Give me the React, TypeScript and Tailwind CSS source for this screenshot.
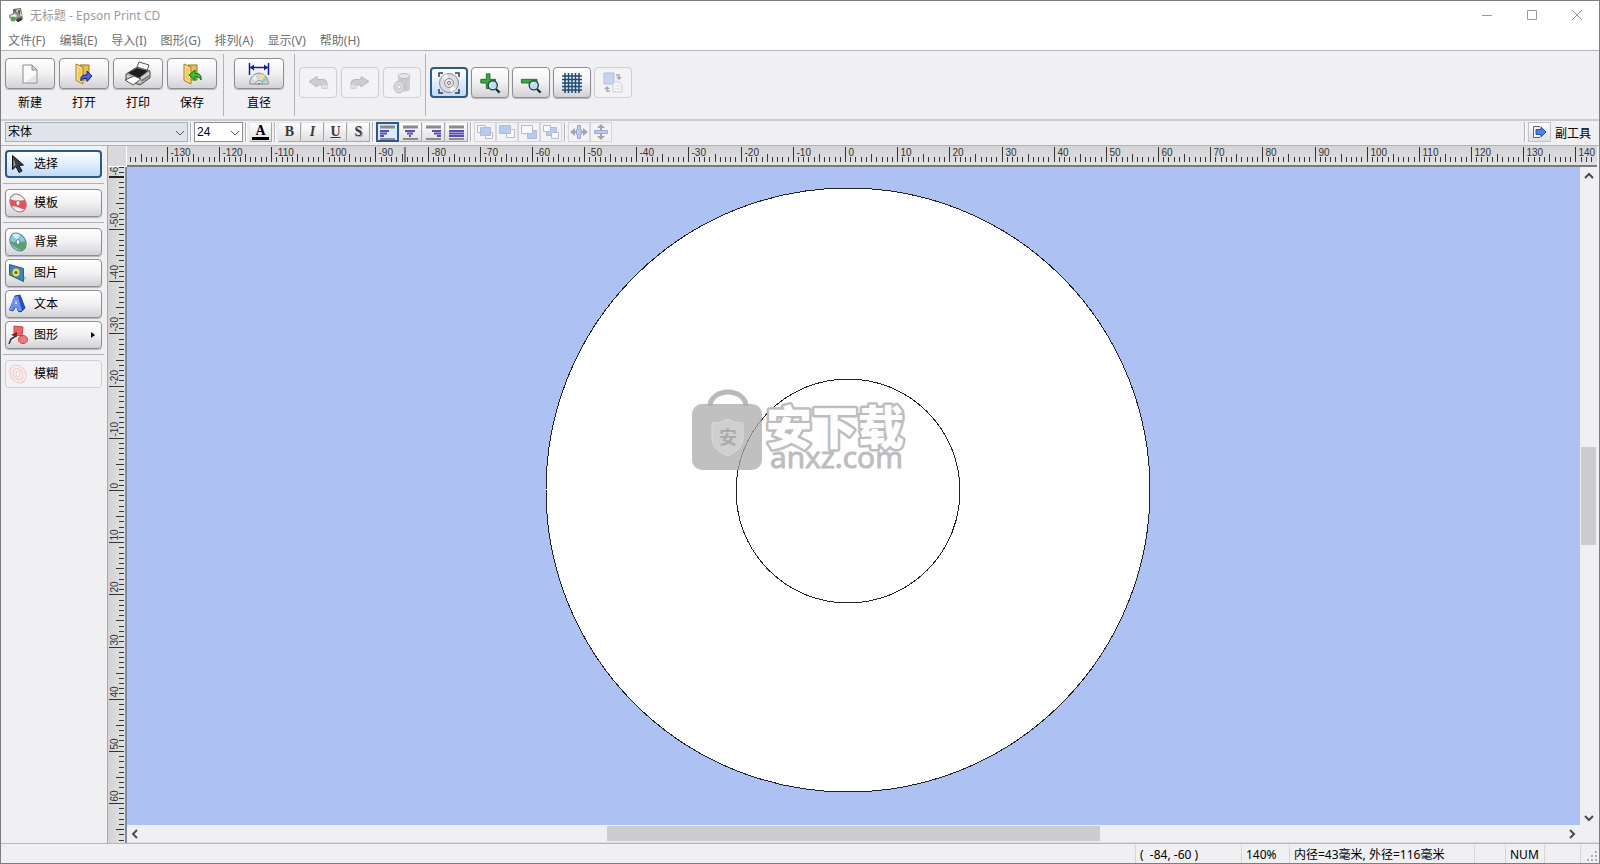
import { ReactNode, useEffect, useState } from "react"
import clsx from "clsx"

const MM = 5.217
const ZERO_X = 719
const ZERO_Y = 324

const menus = ["文件(F)", "编辑(E)", "导入(I)", "图形(G)", "排列(A)", "显示(V)", "帮助(H)"]

const raised = "border border-[#8e8e92] bg-gradient-to-b from-white via-[#f1f1f3] to-[#d3d3d6] shadow-[0_1px_1px_#b5b5b8]"
const pressed = "border-2 border-[#2c5a85] bg-gradient-to-b from-white to-[#bfdcf8]"
const faded = "border border-[#cfcfd3] bg-[#f3f2f5]"

/* ---------- icons ---------- */

const AppIcon = () => (
    <svg width="16" height="16" viewBox="0 0 16 16">
        <path d="M5 2l8-1 2 11-5 3-5-4z" fill="#6c6c66" />
        <path d="M8 3l4-1 2 7-4 1z" fill="#d8d6cf" />
        <path d="M9 9l2-6M11 9l1-6" stroke="#444" />
        <path d="M1 8l6-3 5 4-5 4-6-2z" fill="#8fa28c" />
        <path d="M2 9l5-2 2 2-4 2z" fill="#eef5ec" />
        <circle cx="5" cy="12" r="2.5" fill="#56a052" />
        <path d="M8 13l5-2 1 2-4 2z" fill="#333" />
    </svg>
)

const NewIcon = () => (
    <svg width="24" height="24" viewBox="0 0 24 24">
        <path d="M5 3h9l5 5v13H5z" fill="#fbfbfb" stroke="#8b8b8b" />
        <path d="M14 3v5h5z" fill="#d5d5d5" stroke="#8b8b8b" />
        <path d="M7 20h11V12z" fill="#e6e6e6" />
    </svg>
)

const FolderIcon = ({ arrow }: { arrow: "out" | "in" }) => (
    <svg width="24" height="24" viewBox="0 0 24 24">
        <path d="M8 3h9v15H8z" fill="#e9bd55" stroke="#9b7522" />
        <path d="M4 2l7 3V22l-7-3.500z" fill="#f9dc8a" stroke="#a67e2a" />
        <path d="M6 5.500l3 1V19l-3-1.500z" fill="#f3c964" />
        {arrow === "out" ? (
            <path d="M9 19q-1-6 4-6h2V9l5 5-5 5.500v-3h-3q-2 0-3 2.500z" fill="#4a62d8" stroke="#1f2b8c" />
        ) : (
            <path d="M21 18q1-6-4-6.500h-2V8l-6 5 6 5.500V15h3q2 0 3 3z" fill="#35c23c" stroke="#13701b" />
        )}
    </svg>
)

const PrinterIcon = () => (
    <svg width="28" height="26" viewBox="0 0 28 26">
        <path d="M12 9l3-8 10 3-3 9z" fill="#fafafa" stroke="#555" />
        <path d="M2 13l11-7 13 4v7l-10 7L2 19z" fill="#a9a9ab" stroke="#555" />
        <path d="M4 12l9-5 11 3-9 7z" fill="#1d1d1f" />
        <path d="M3 14l12 4 10-7v5l-9 6-13-4z" fill="#d4d4d6" />
        <path d="M1 19l9-4 7 3-8 6z" fill="#fff" stroke="#4c4c4c" />
        <path d="M17 20l8-5" stroke="#777" strokeWidth="2" />
    </svg>
)

const DiameterIcon = () => (
    <svg width="24" height="24" viewBox="0 0 24 24">
        <path d="M2.500 1v12M21.500 1v12M3 5.500h18" stroke="#1b1b9c" strokeWidth="1.500" fill="none" />
        <path d="M3 5.500l4-3v6zM21 5.500l-4-3v6z" fill="#1b1b9c" />
        <path d="M2.500 22a9.500 11 0 0 1 19 0z" fill="#d4d6da" stroke="#8c8f96" />
        <path d="M12 22L14 11.500l4 2z" fill="#f2e18a" />
        <path d="M12 22l6-7.500 3 4z" fill="#8fd0c4" />
        <path d="M12 22l-7-6 3-3z" fill="#eef0f3" />
        <path d="M8.500 22a3.500 3.500 0 0 1 7 0z" fill="#f7f7f7" stroke="#8c8f96" />
        <path d="M10.500 22a1.500 1.500 0 0 1 3 0z" fill="#777" />
    </svg>
)

const TurnIcon = ({ flip }: { flip?: boolean }) => (
    <svg width="20" height="16" viewBox="0 0 20 16" className={clsx(flip && "-scale-x-100")}>
        <path d="M1 6.500l8-5v3h6q4 0 4 4v5h-5v-3.500H9v2z" fill="#cdcdd0" stroke="#b9b9bd" />
        <path d="M14 10h5v3.500h-5z" fill="#e0e0e2" />
    </svg>
)

const TrashIcon = () => (
    <svg width="22" height="24" viewBox="0 0 22 24">
        <path d="M7 5v14q6 3 12 0V5z" fill="#cfcfd2" />
        <ellipse cx="13" cy="5" rx="6" ry="2.500" fill="#e6e6e8" stroke="#bcbcc0" />
        <path d="M11 7v13M15 7v13" stroke="#bdbdc1" />
        <ellipse cx="8" cy="16" rx="5" ry="6" fill="#dadadd" stroke="#bebec2" />
        <circle cx="8" cy="16" r="2" fill="#f3f3f4" stroke="#c4c4c8" />
    </svg>
)

const FitIcon = () => (
    <svg width="24" height="24" viewBox="0 0 24 24">
        <path d="M2 6V2h4M18 2h4v4M22 18v4h-4M6 22H2v-4" fill="none" stroke="#3b3b3b" strokeWidth="1.500" />
        <circle cx="12" cy="12" r="9.500" fill="#dcdcde" stroke="#8a8a8e" />
        <path d="M12 12L5 6a9 9 0 0 1 5-3zM12 12l7 6a9 9 0 0 1-5 3z" fill="#fafafa" />
        <circle cx="12" cy="12" r="4.500" fill="#e6e6e8" stroke="#8f8f93" />
        <circle cx="12" cy="12" r="1.500" fill="#fff" stroke="#77777b" />
    </svg>
)

const MagnifierIcon = ({ plus }: { plus?: boolean }) => (
    <svg width="22" height="22" viewBox="0 0 24 24">
        {plus ? (
            <path d="M8 2h4v6h6v4h-6v6H8v-6H2V8h6z" fill="#3fa83f" stroke="#1e6a24" />
        ) : (
            <path d="M1.500 8h17v4h-17z" fill="#3fa83f" stroke="#1e6a24" />
        )}
        <path d="M18.500 18.500l4 4" stroke="#1c2c38" strokeWidth="2.500" />
        <circle cx="15" cy="14.500" r="5" fill="#b9e0ec" stroke="#2d4351" strokeWidth="1.500" />
        <path d="M12.500 14a3 3 0 0 1 3-2" fill="none" stroke="#fff" />
    </svg>
)

const GridIcon = () => (
    <svg width="20" height="20" viewBox="0 0 20 20">
        <path d="M3 0v20M6.500 0v20M10 0v20M13.500 0v20M17 0v20M0 3h20M0 6.500h20M0 10h20M0 13.500h20M0 17h20" stroke="#1f4a74" strokeWidth="1.500" />
    </svg>
)

const SwapIcon = () => (
    <svg width="22" height="22" viewBox="0 0 22 22">
        <path d="M2 1h10v11H2z" fill="#c6d3f2" stroke="#b3bde0" />
        <path d="M11 10h6l3 3v7h-9z" fill="#fafafa" stroke="#c9c9cd" />
        <path d="M13 14h5M13 17h5" stroke="#d4d4d8" />
        <path d="M14 3h3v3M8 19H5v-3" fill="none" stroke="#a9a9ad" strokeWidth="1.500" />
        <path d="M14 5h6l-3 3zM2 17h6l-3-3z" fill="#a9a9ad" />
    </svg>
)

const AlignIcon = ({ kind }: { kind: "left" | "center" | "right" | "justify" }) => {
    const bars = {
        left: "M1 7h9M1 9.500h7M1 12h4",
        center: "M3 7h10M5 9.500h6M7 12h2",
        right: "M7 7h9M9 9.500h7M12 12h4",
        justify: "M1 7h15M1 9.500h15M1 12h15",
    }
    return (
        <svg width="17" height="17" viewBox="0 0 17 17">
            <path d="M1 3h15" stroke="#8a8a8c" strokeWidth="3" />
            <path d={bars[kind]} stroke="#5650b4" strokeWidth="2" />
            <path d="M1 15h15" stroke="#6d6d72" strokeWidth="1.500" />
        </svg>
    )
}

const OrderIcon = ({ kind }: { kind: number }) => (
    <svg width="18" height="18" viewBox="0 0 18 18" stroke="#b4bad0">
        {kind === 0 && (
            <>
                <path d="M1.500 2.500h8v7h-8zM9.500 9.500h7v6h-7z" fill="#fafafa" />
                <path d="M4.500 4.500h10v8h-10z" fill="#b8c9f2" />
            </>
        )}
        {kind === 1 && (
            <>
                <path d="M8.500 6.500h8v8h-8z" fill="#fafafa" />
                <path d="M1.500 2.500h11v8h-11z" fill="#b8c9f2" />
            </>
        )}
        {kind === 2 && (
            <>
                <path d="M7.500 7.500h9v8h-9z" fill="#b8c9f2" />
                <path d="M1.500 2.500h11v8h-11z" fill="#fafafa" />
            </>
        )}
        {kind === 3 && (
            <>
                <path d="M4.500 4.500h10v8h-10z" fill="#b8c9f2" />
                <path d="M1.500 2.500h7v6h-7zM9.500 9.500h7v6h-7z" fill="#fafafa" />
            </>
        )}
    </svg>
)

const CenterIcon = ({ vertical }: { vertical?: boolean }) => (
    <svg width="18" height="18" viewBox="0 0 18 18">
        {vertical ? (
            <>
                <path d="M9 1l4 4H5zM9 17l4-4H5z" fill="#a3a3a8" />
                <path d="M9 4v10" stroke="#a3a3a8" strokeWidth="2" />
                <path d="M2.500 7.500h13v3h-13z" fill="#b8c9f2" stroke="#9cabd6" />
            </>
        ) : (
            <>
                <path d="M0 9l5-4v8zM18 9l-5-4v8z" fill="#a3a3a8" />
                <path d="M4 9h10" stroke="#a3a3a8" strokeWidth="2" />
                <path d="M6.500 6.500h1v-4h3v4h1v5h-1v4h-3v-4h-1z" fill="#b8c9f2" stroke="#9cabd6" />
            </>
        )}
    </svg>
)

const ExitIcon = () => (
    <svg width="16" height="16" viewBox="0 0 16 16">
        <path d="M9 2.500H2.500v11H9" fill="#f5f5f5" stroke="#5d6470" />
        <path d="M5 5.500h5V3l5 5-5 5v-2.500H5z" fill="#4d80ea" stroke="#2450b0" />
    </svg>
)

const ArrowIcon = () => (
    <svg width="20" height="20" viewBox="0 0 20 20">
        <path d="M4.500 1.500v14l3.500-3 3 6 3-1.500-3-5.500 4.500-.5z" fill="#3d3d40" stroke="#111" />
        <path d="M5.500 4v9l2-2z" fill="#a8a8ab" />
    </svg>
)

const DiscIcon = ({ kind }: { kind: "red" | "blue" | "pale" }) => {
    const c = {
        red: ["#f2f0f0", "#e4525a", "#9a7c7e"],
        blue: ["#8cc8de", "#5ca06a", "#4f7f94"],
        pale: ["#fbecec", "#f7dada", "#f0c6c6"],
    }[kind]
    return (
        <svg width="20" height="20" viewBox="0 0 20 20">
            <g transform="rotate(-35 10 10)">
                <ellipse cx="10" cy="10" rx="7.500" ry="9.500" fill={c[0]} stroke={c[2]} />
            </g>
            {kind === "red" && <path d="M2 6q5 3 15 1 2 5 1 8-3 2-6 0-4-2-9-2-1-3-1-7z" fill={c[1]} />}
            {kind === "blue" && <path d="M2 9q7 3 15 0 2 5-1 9-4 1-9-3-4-3-5-6z" fill={c[1]} />}
            {kind === "blue" && <path d="M4 3l5 5 3-5q-4-3-8 0z" fill="#d7eff6" />}
            {kind === "pale" && <ellipse cx="10" cy="10" rx="4.500" ry="6" fill="none" stroke={c[2]} transform="rotate(-35 10 10)" />}
            <ellipse cx="10" cy="10" rx="2" ry="2.500" fill="#fff" stroke={c[2]} />
        </svg>
    )
}

const PictureIcon = () => (
    <svg width="20" height="20" viewBox="0 0 20 20">
        <path d="M14 18l5-3-3-2z" fill="#b9b9bd" />
        <path d="M1.500 1.500l14 4v13l-14-6.500z" fill="#3f83bb" stroke="#2d5f8c" />
        <ellipse cx="8" cy="9.500" rx="3.500" ry="4" fill="#f0dc48" />
        <circle cx="8" cy="9.500" r="1.500" fill="#6a5a1c" />
        <path d="M2 8l4 5-4-1.500z" fill="#4a9b52" />
    </svg>
)

const LetterIcon = () => (
    <svg width="20" height="20" viewBox="0 0 20 20">
        <path d="M1.500 16L7 2l5-1 5 13-4 4-3-1-1-4H7l-2 4z" fill="#2c50b4" stroke="#213f94" />
        <path d="M1.500 16L6 3l4-1 4 15h-4l-1-4-3 .5-1 3z" fill="#6b93ee" />
        <path d="M7 10l1-4 1 4z" fill="#e8eefc" />
    </svg>
)

const ShapeIcon = () => (
    <svg width="20" height="20" viewBox="0 0 20 20">
        <path d="M6 1l9 1-1 9-8-1z" fill="#ea6468" stroke="#c1474b" />
        <ellipse cx="15" cy="14.500" rx="4.500" ry="4" fill="#ee7a7c" stroke="#b9454a" />
        <path d="M1 19l2-5 5-3" fill="none" stroke="#333" strokeWidth="1.500" />
        <path d="M3 10l6-3 0 5z" fill="#8f2026" />
    </svg>
)

const Chevron = ({ className }: { className?: string }) => (
    <svg width="10" height="10" viewBox="0 0 10 10" className={className}>
        <path d="M1 3l4 4 4-4" fill="none" stroke="currentColor" />
    </svg>
)

/* ---------- small parts ---------- */

const Divider = () => <div className="w-px self-stretch bg-[#b4b4b8]" />

const Grip = () => <div className="mx-[2px] h-5 w-[2px] border-l border-[#b4b4b8] bg-white" />

interface BigButtonProps {
    label: string;
    children: ReactNode;
}

const BigButton = ({ label, children }: BigButtonProps) => (
    <button type="button" className="flex w-[50px] flex-col items-center gap-1">
        <span className={clsx("flex h-[31px] w-full items-center justify-center rounded-[4px]", raised)}>{children}</span>
        <span className="leading-5">{label}</span>
    </button>
)

interface IconButtonProps {
    title: string;
    state?: "on" | "off";
    children: ReactNode;
}

const IconButton = ({ title, state, children }: IconButtonProps) => (
    <button
        type="button"
        aria-label={title}
        disabled={state === "off"}
        className={clsx(
            "flex h-[31px] w-[38px] items-center justify-center rounded-[4px]",
            state === "on" ? pressed : state === "off" ? faded : raised
        )}
    >
        {children}
    </button>
)

const FormatButton = ({ title, state, children }: IconButtonProps) => (
    <button
        type="button"
        aria-label={title}
        disabled={state === "off"}
        className={clsx(
            "flex h-5 items-center justify-center font-['Liberation_Serif',serif] text-sm leading-4 font-bold text-[#3a3a3d]",
            state === "off" ? "w-[22px]" : "w-[23px]",
            state === "on" && "border-2 border-[#2c5a85] bg-[#dcebfa]",
            state === "off" && "border border-[#d6d6da] bg-[#f3f2f5]",
            !state && "border border-t-[#e6e6e8] border-r-[#a5a5a9] border-b-[#a5a5a9] border-l-[#e6e6e8] bg-gradient-to-b from-white to-[#dedee1]"
        )}
    >
        {children}
    </button>
)

interface ToolButtonProps {
    label: string;
    icon: ReactNode;
    active?: boolean;
    disabled?: boolean;
    submenu?: boolean;
    onClick?: () => void;
}

const ToolButton = ({ label, icon, active, disabled, submenu, onClick }: ToolButtonProps) => (
    <button
        type="button"
        disabled={disabled}
        onClick={onClick}
        className={clsx(
            "flex h-7 w-full items-center gap-[6px] rounded-[4px] text-left",
            active ? "pl-px" : "pl-[2px]",
            active ? pressed : disabled ? faded : raised
        )}
    >
        {icon}
        <span>{label}</span>
        {submenu && (
            <svg width="4" height="6" viewBox="0 0 4 6" className="mr-[6px] ml-auto">
                <path d="M0 0l4 3-4 3z" fill="#000" />
            </svg>
        )}
    </button>
)

const ToolRule = () => <div className="-mx-[2px] my-[5px] h-px bg-[#b0b0b4]" />

/* ---------- rulers ---------- */

const tickSize = (n: number) => (n % 10 === 0 ? 15 : n % 5 === 0 ? 8 : 5)

const range = (from: number, to: number) => Array.from({ length: Math.max(0, to - from + 1) }, (_, i) => from + i)

const HorizontalRuler = ({ length }: { length: number }) => (
    <svg className="block h-5 w-full font-['Liberation_Sans',sans-serif] text-[10px]">
        {range(-137, Math.floor((length - ZERO_X) / MM)).map((n) => {
            const x = Math.round(ZERO_X + n * MM) - 0.5
            return (
                <g key={n}>
                    <line x1={x} x2={x} y1={16 - tickSize(n)} y2={16} stroke="#333" />
                    {n % 10 === 0 && <text x={x + 3} y="10" fill="#333">{n}</text>}
                </g>
            )
        })}
        <rect x="277" y="1" width="2" height="15" fill="#7d7d80" />
    </svg>
)

const VerticalRuler = ({ length }: { length: number }) => (
    <svg className="block h-full w-[17px] font-['Liberation_Sans',sans-serif] text-[10px]">
        {range(-62, Math.floor((length - ZERO_Y) / MM)).map((n) => {
            const y = Math.round(ZERO_Y + n * MM) - 0.5
            return (
                <g key={n}>
                    <line x1={16 - tickSize(n)} x2={16} y1={y} y2={y} stroke="#333" />
                    {n % 10 === 0 && <text transform={`translate(10 ${y - 2}) rotate(-90)`} fill="#333">{n}</text>}
                </g>
            )
        })}
        <rect x="1" y="9" width="15" height="2" fill="#222" />
    </svg>
)

const Watermark = () => (
    <g transform="translate(565 222)">
        <path d="M18 17a18 14 0 0 1 36 0" fill="none" stroke="#b9b9b9" strokeWidth="5" />
        <rect x="0" y="15" width="70" height="66" rx="10" fill="#ababab" fillOpacity="0.75" />
        <path d="M20 34q9 0 15.500-4 7 4 15.500 4v16q0 10-15.500 17Q20 60 20 50z" fill="#cfcfcf" stroke="#d9d9d9" />
        <text x="36" y="55" textAnchor="middle" fill="#ababab" className="text-[18px] font-bold">安</text>
        <text x="74" y="55" fill="#fdfdfd" stroke="#bdbdbd" strokeWidth="5" strokeLinejoin="round" paintOrder="stroke" className="text-[46px] font-black">
            安下载
        </text>
        <text x="78" y="79" fill="#bdbdbd" stroke="#bdbdbd" className="font-['Open_Sans',sans-serif] text-[30px]">anxz.com</text>
    </g>
)

const Canvas = () => (
    <svg className="block h-full w-full bg-[#aec1f3]">
        <g stroke="#222" shapeRendering="crispEdges">
            <circle cx="721" cy="323" r="302" fill="#fefefe" />
            <circle cx="721" cy="324" r="112" fill="none" />
        </g>
        <Watermark />
    </svg>
)

/* ---------- page ---------- */

export default function App() {
    const [tool, setTool] = useState("选择")
    const [size, setSize] = useState({ width: window.innerWidth, height: window.innerHeight })

    useEffect(() => {
        const onResize = () => setSize({ width: window.innerWidth, height: window.innerHeight })
        window.addEventListener("resize", onResize)
        return () => window.removeEventListener("resize", onResize)
    }, [])

    return (
        <div className="flex h-screen w-full flex-col overflow-hidden border border-[#7c7f80] bg-[#f0eff2] font-['Noto_Sans','Noto_Sans_CJK_SC',sans-serif] text-xs text-black">
            <header className="bg-white">
                <div className="flex h-7 items-center gap-[6px] pl-[7px] text-[#9a9a9a]">
                    <AppIcon />
                    <h1 className="flex-1 pt-px">无标题 - Epson Print CD</h1>
                    <div className="flex text-[#999]">
                        <button type="button" aria-label="最小化" className="flex w-[45px] justify-center">
                            <svg width="10" height="10" viewBox="0 0 10 10"><path d="M0 5.500h10" stroke="currentColor" /></svg>
                        </button>
                        <button type="button" aria-label="最大化" className="flex w-[45px] justify-center">
                            <svg width="10" height="10" viewBox="0 0 10 10"><path d="M.5.5h9v9h-9z" fill="none" stroke="currentColor" /></svg>
                        </button>
                        <button type="button" aria-label="关闭" className="flex w-[45px] justify-center">
                            <svg width="10" height="10" viewBox="0 0 10 10"><path d="M0 0l10 10M10 0L0 10" stroke="currentColor" /></svg>
                        </button>
                    </div>
                </div>
                <nav className="flex h-[22px] items-center gap-[14px] border-b border-[#b3b3b6] pt-[2px] pl-[7px] text-[#6e6e6e]">
                    {menus.map((menu) => (
                        <button type="button" key={menu}>{menu}</button>
                    ))}
                </nav>
            </header>

            <div className="flex h-[70px] border-b-2 border-[#cbcbce] py-[3px] pl-1">
                <div className="flex items-start gap-1 pt-1">
                    <BigButton label="新建"><NewIcon /></BigButton>
                    <BigButton label="打开"><FolderIcon arrow="out" /></BigButton>
                    <BigButton label="打印"><PrinterIcon /></BigButton>
                    <BigButton label="保存"><FolderIcon arrow="in" /></BigButton>
                </div>
                <div className="ml-[6px] flex"><Divider /></div>
                <div className="mr-[10px] ml-[10px] pt-1">
                    <BigButton label="直径"><DiameterIcon /></BigButton>
                </div>
                <Divider />
                <div className="mx-[4px] flex items-start gap-[4px] pt-[13px]">
                    <IconButton title="撤消" state="off"><TurnIcon /></IconButton>
                    <IconButton title="恢复" state="off"><TurnIcon flip /></IconButton>
                    <IconButton title="删除" state="off"><TrashIcon /></IconButton>
                </div>
                <Divider />
                <div className="mx-[4px] flex items-start gap-[3px] pt-[13px]">
                    <IconButton title="适合窗口" state="on"><FitIcon /></IconButton>
                    <IconButton title="放大"><MagnifierIcon plus /></IconButton>
                    <IconButton title="缩小"><MagnifierIcon /></IconButton>
                    <IconButton title="网格"><GridIcon /></IconButton>
                    <IconButton title="切换" state="off"><SwapIcon /></IconButton>
                </div>
            </div>

            <div className="flex h-[25px] items-start border-b border-[#b3b3b6] pt-px pr-2 pl-1">
                <div className="relative">
                    <select aria-label="字体" className="block h-5 w-[183px] appearance-none border border-[#a3b0b8] bg-[#e0e4ea] pl-[2px]">
                        <option>宋体</option>
                    </select>
                    <Chevron className="pointer-events-none absolute top-[6px] right-[3px] text-[#555]" />
                </div>
                <Grip />
                <div className="relative">
                    <select aria-label="字号" className="block h-5 w-[49px] appearance-none border border-[#8e8e92] bg-white pl-[2px] font-['Liberation_Sans',sans-serif]">
                        <option>24</option>
                    </select>
                    <Chevron className="pointer-events-none absolute top-[6px] right-[3px] text-[#555]" />
                </div>
                <Grip />
                <FormatButton title="颜色">
                    <span className="border-b-[3px] border-black px-[3px] leading-[12px] text-black">A</span>
                </FormatButton>
                <Grip />
                <div className="flex">
                    <FormatButton title="粗体">B</FormatButton>
                    <FormatButton title="斜体"><span className="italic">I</span></FormatButton>
                    <FormatButton title="下划线"><span className="underline">U</span></FormatButton>
                    <FormatButton title="阴影"><span className="[text-shadow:1px_1px_0_#aaa]">S</span></FormatButton>
                </div>
                <Grip />
                <div className="flex">
                    <FormatButton title="左对齐" state="on"><AlignIcon kind="left" /></FormatButton>
                    <FormatButton title="居中"><AlignIcon kind="center" /></FormatButton>
                    <FormatButton title="右对齐"><AlignIcon kind="right" /></FormatButton>
                    <FormatButton title="两端对齐"><AlignIcon kind="justify" /></FormatButton>
                </div>
                <Grip />
                <div className="flex">
                    {["移到最前", "前移", "后移", "移到最后"].map((title, index) => (
                        <FormatButton key={title} title={title} state="off"><OrderIcon kind={index} /></FormatButton>
                    ))}
                </div>
                <Grip />
                <div className="flex">
                    <FormatButton title="水平居中" state="off"><CenterIcon /></FormatButton>
                    <FormatButton title="垂直居中" state="off"><CenterIcon vertical /></FormatButton>
                </div>
                <div className="ml-auto flex items-center">
                    <Grip />
                    <button type="button" className="flex items-center gap-1">
                        <span className="flex h-5 w-[23px] items-center justify-center border border-[#c4c4c8] bg-gradient-to-b from-white to-[#dedee1]">
                            <ExitIcon />
                        </span>
                        <span className="pt-[3px]">副工具</span>
                    </button>
                </div>
            </div>

            <main className="flex min-h-0 flex-1">
                <aside className="w-[107px] border-r border-[#a9a9ad] py-1 pr-[5px] pl-1">
                    <ToolButton label="选择" icon={<ArrowIcon />} active={tool === "选择"} onClick={() => setTool("选择")} />
                    <ToolRule />
                    <ToolButton label="模板" icon={<DiscIcon kind="red" />} active={tool === "模板"} onClick={() => setTool("模板")} />
                    <ToolRule />
                    <div className="flex flex-col gap-[3px]">
                        <ToolButton label="背景" icon={<DiscIcon kind="blue" />} />
                        <ToolButton label="图片" icon={<PictureIcon />} />
                        <ToolButton label="文本" icon={<LetterIcon />} />
                        <ToolButton label="图形" icon={<ShapeIcon />} submenu />
                    </div>
                    <ToolRule />
                    <ToolButton label="模糊" icon={<DiscIcon kind="pale" />} disabled />
                </aside>

                <div className="grid min-w-0 flex-1 grid-cols-[19px_1fr] grid-rows-[21px_1fr]">
                    <div className="border-r border-b border-white bg-[#d9d9dc]" />
                    <div className="mr-[2px] overflow-hidden border-b-2 border-[#77797f] bg-gradient-to-b from-[#d3d3d5] to-[#e2e2e4]">
                        <HorizontalRuler length={size.width - 130} />
                    </div>
                    <div className="overflow-hidden border-r-2 border-[#7f8ba3] bg-gradient-to-r from-[#d3d3d5] to-[#e2e2e4]">
                        <VerticalRuler length={size.height - 190} />
                    </div>
                    <div className="grid min-h-0 grid-cols-[1fr_19px] grid-rows-[1fr_18px]">
                        <div className="min-h-0 overflow-hidden"><Canvas /></div>
                        <div className="flex min-h-0 flex-col items-center pt-1 pb-[2px] text-[#4c4c50]">
                            <Chevron className="mr-[2px] rotate-180 stroke-2" />
                            <div className="flex w-full flex-1 flex-col items-start pl-px">
                                <div className="flex-[264]" />
                                <div className="w-[15px] flex-[98] bg-[#cdcdd0]" />
                                <div className="flex-[266]" />
                            </div>
                            <Chevron className="mr-[2px] stroke-2" />
                        </div>
                        <div className="flex items-center border-b border-[#dcdce0] px-[3px] text-[#4c4c50]">
                            <Chevron className="rotate-90 stroke-2" />
                            <div className="flex h-full flex-1 py-px">
                                <div className="flex-[467]" />
                                <div className="flex-[492] bg-[#cdcdd0]" />
                                <div className="flex-[467]" />
                            </div>
                            <Chevron className="-rotate-90 stroke-2" />
                        </div>
                        <div className="border-b border-[#dcdce0]" />
                    </div>
                </div>
            </main>

            <footer className="flex h-5 items-center justify-end border-t border-[#b8b8bc] leading-4 whitespace-pre">
                <div className="w-[106px] border-l border-[#d6d6da] pt-[2px] pl-1">{"(  -84, -60 )"}</div>
                <div className="w-12 border-l border-[#d6d6da] pt-[2px] pl-1">140%</div>
                <div className="w-[185px] border-l border-[#d6d6da] pt-[2px] pl-1">内径=43毫米, 外径=116毫米</div>
                <div className="h-[18px] w-[31px] border-l border-[#d6d6da]" />
                <div className="w-[39px] border-l border-[#d6d6da] pt-[2px] pl-1">NUM</div>
                <div className="h-[18px] w-9 border-l border-[#d6d6da]" />
                <div className="flex h-[18px] w-[19px] items-end justify-end border-l border-[#d6d6da] p-[2px]">
                    <svg width="10" height="10" viewBox="0 0 10 10" fill="#b0b0b4">
                        <path d="M8 0h2v2H8zM8 4h2v2H8zM4 4h2v2H4zM8 8h2v2H8zM4 8h2v2H4zM0 8h2v2H0z" />
                    </svg>
                </div>
            </footer>
        </div>
    )
}
